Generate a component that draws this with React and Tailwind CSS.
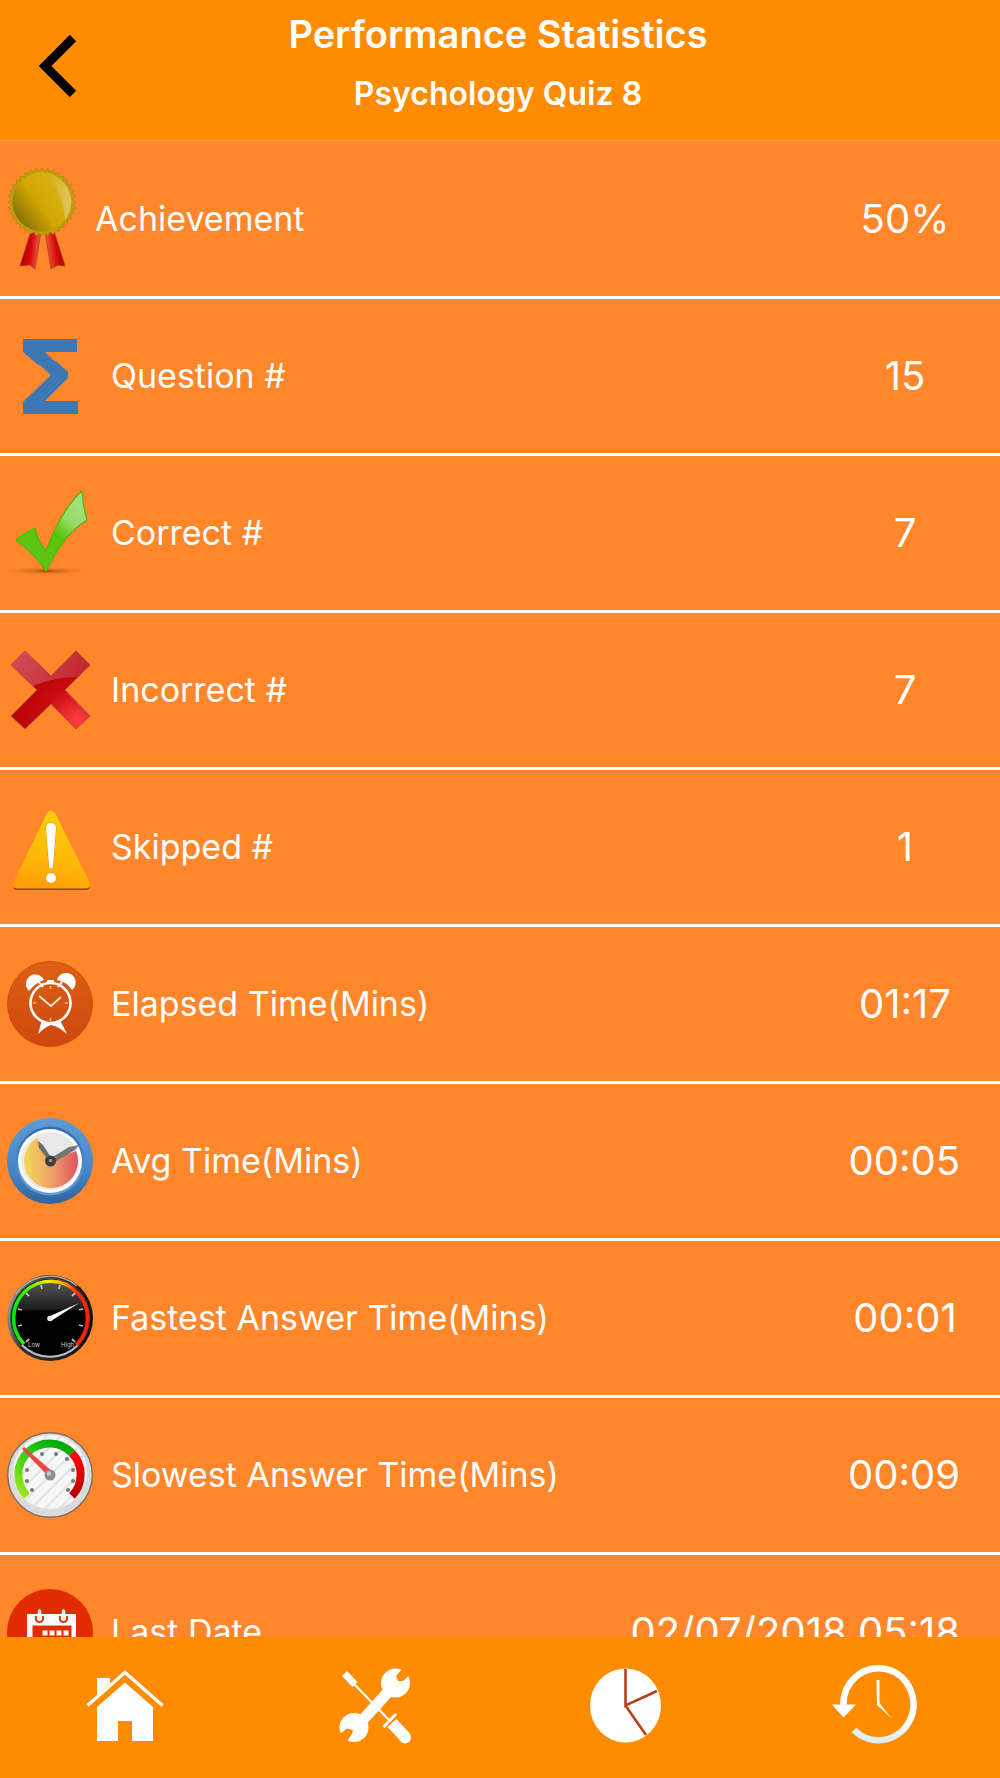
const sealPoints = Array.from({ length: 72 }, (_, i) => {
  const r = i % 2 ? 31 : 34;
  const a = (i * Math.PI) / 36;
  return `${(34 + r * Math.sin(a)).toFixed(1)},${(34 - r * Math.cos(a)).toFixed(1)}`;
}).join(' ');

function Icon({ children }) {
  return (
    <svg viewBox="0 0 86 86" className="w-[86px] h-[86px] shrink-0" aria-hidden="true">
      {children}
    </svg>
  );
}

function MedalIcon() {
  return (
    <svg viewBox="-1 0 70 102" className="w-[70px] h-[102px] shrink-0" aria-hidden="true">
      <defs>
        <linearGradient id="gold" x1="0.1" y1="0.8" x2="0.9" y2="0.2">
          <stop offset="0" stopColor="#8a7008" />
          <stop offset="0.45" stopColor="#d0a800" />
          <stop offset="1" stopColor="#d8b420" />
        </linearGradient>
        <linearGradient id="goldShine" x1="0" y1="0" x2="1" y2="0">
          <stop offset="0" stopColor="#d4ac00" />
          <stop offset="1" stopColor="#e0c560" />
        </linearGradient>
        <linearGradient id="ribbonL" x1="0" y1="0" x2="1" y2="0.2">
          <stop offset="0.2" stopColor="#b00000" />
          <stop offset="0.6" stopColor="#d90808" />
          <stop offset="1" stopColor="#e56a50" />
        </linearGradient>
        <linearGradient id="ribbonR" x1="0" y1="0.2" x2="1" y2="0">
          <stop offset="0" stopColor="#e8603c" />
          <stop offset="0.5" stopColor="#d50505" />
          <stop offset="1" stopColor="#8c0a00" />
        </linearGradient>
      </defs>
      <path d="M23 63 L33 64 L27 101 L22 97 L12 98 Z" fill="url(#ribbonL)" stroke="#a03010" strokeWidth="0.6" />
      <path d="M37 64 L46 63 L57 98 L50 97 L43 101 Z" fill="url(#ribbonR)" stroke="#a03010" strokeWidth="0.6" />
      <polygon points={sealPoints} fill="#c49c0c" stroke="#b08a14" strokeWidth="0.8" />
      <circle cx="34" cy="34" r="29.500" fill="url(#gold)" />
      <path d="M36 5 A29.500 29.500 0 0 1 57 52 C56 32 48 16 36 5Z" fill="url(#goldShine)" />
    </svg>
  );
}

function SigmaIcon() {
  return (
    <Icon>
      <path d="M16 6 H70 V19 H38 L46 27 L50 29 L61 39 V45 L38 68 H71 V81 H16 V69 L44 42 L34 33 L30 31 L16 19 Z" fill="#3c76b3" />
    </Icon>
  );
}

function CheckIcon() {
  return (
    <Icon>
      <defs>
        <linearGradient id="check" x1="0.9" y1="0" x2="0.35" y2="0.8">
          <stop offset="0.1" stopColor="#a8e07c" />
          <stop offset="0.4" stopColor="#98da68" />
          <stop offset="0.65" stopColor="#58c40c" />
          <stop offset="1" stopColor="#5cc612" />
        </linearGradient>
        <radialGradient id="checkShadow">
          <stop offset="0" stopColor="#5a2a00" />
          <stop offset="0.25" stopColor="#c05f14" stopOpacity="0.7" />
          <stop offset="1" stopColor="#d06a1a" stopOpacity="0" />
        </radialGradient>
      </defs>
      <ellipse cx="39" cy="81" rx="40" ry="4" fill="url(#checkShadow)" />
      <path d="M9 50 Q17 43 28 38 Q31 52 39 61 Q54 20 75 1 Q76 16 80 30 C60 42 50 60 39 81 Q28 64 9 50Z" fill="url(#check)" stroke="#52b810" strokeWidth="1.3" strokeLinejoin="round" />
    </Icon>
  );
}

function CrossIcon() {
  return (
    <Icon>
      <defs>
        <radialGradient id="cross" cx="0.85" cy="0.9" r="0.8">
          <stop offset="0" stopColor="#ff4146" />
          <stop offset="0.55" stopColor="#c90c10" />
          <stop offset="1" stopColor="#b60307" />
        </radialGradient>
        <linearGradient id="crossGloss" x1="0" y1="0" x2="1" y2="0.5">
          <stop offset="0" stopColor="#d05058" />
          <stop offset="1" stopColor="#c2202a" />
        </linearGradient>
        <clipPath id="crossTop">
          <path d="M0 0 H86 V30 Q50 28 26 39 L0 45 Z" />
        </clipPath>
      </defs>
      <path d="M18 4 L44 29 L69 4 L83 18 L58 43 L83 69 L69 82 L44 57 L18 82 L4 69 L30 43 L4 18 Z" fill="url(#cross)" stroke="#b84a38" strokeWidth="1" strokeLinejoin="round" />
      <path d="M18 4 L44 29 L69 4 L83 18 L58 43 L83 69 L69 82 L44 57 L18 82 L4 69 L30 43 L4 18 Z" fill="url(#crossGloss)" clipPath="url(#crossTop)" />
    </Icon>
  );
}

function WarningIcon() {
  return (
    <Icon>
      <defs>
        <linearGradient id="warn" x1="0.6" y1="0" x2="0.4" y2="1">
          <stop offset="0" stopColor="#ffcf08" />
          <stop offset="0.6" stopColor="#ffb90a" />
          <stop offset="1" stopColor="#ff9e08" />
        </linearGradient>
      </defs>
      <path d="M6 82 Q6 86 10 86 H79 Q83 86 83 82 Z" fill="#8a4c08" />
      <path d="M40 9 Q44 4 48 9 L83 79 Q84 84 79 84.500 H10 Q4 84 6 79 Z" fill="url(#warn)" />
      <path d="M39 24 Q39 19 44 19 Q49 19 49 24 L46 63 Q44 66 42 63 Z" fill="#fff" stroke="#f08a10" strokeWidth="1" paintOrder="stroke" />
      <circle cx="44" cy="74" r="5" fill="#fff" stroke="#f08a10" strokeWidth="1" paintOrder="stroke" />
    </Icon>
  );
}

function AlarmIcon() {
  return (
    <Icon>
      <defs>
        <linearGradient id="alarm" x1="0" y1="0" x2="0" y2="1">
          <stop offset="0" stopColor="#dc6114" />
          <stop offset="1" stopColor="#cd470c" />
        </linearGradient>
      </defs>
      <circle cx="43" cy="43" r="42.500" fill="url(#alarm)" stroke="#c8500f" strokeWidth="1" />
      <path d="M22 30 A9.500 9.500 0 1 1 37 19 Q28 22 22 30Z" fill="#fff" />
      <path d="M65 29 A9.500 9.500 0 1 0 50 19 Q60 21 65 29Z" fill="#fff" />
      <path d="M40 19 H47 V23 H40Z" fill="#fff" />
      <path d="M32 21 L36 26 M55 21 L51 26" stroke="#fff" strokeWidth="2" />
      <circle cx="43.500" cy="42" r="20" fill="none" stroke="#fff" strokeWidth="2.600" />
      <path d="M35 59 L31 73 Q38 66 44 64 Q51 65 60 73 L53 59 Q44 64 35 59Z" fill="#fff" />
      <path d="M32 35 L44 45 L54 36" fill="none" stroke="#ffe7d8" strokeWidth="1.800" />
      <path d="M43.500 25 V28 M26 42 H29 M58 42 H61 M43.500 57 V60" stroke="#f2bc9c" strokeWidth="1.500" />
    </Icon>
  );
}

function AvgClockIcon() {
  return (
    <Icon>
      <defs>
        <linearGradient id="avgRing" x1="0" y1="0" x2="0" y2="1">
          <stop offset="0" stopColor="#5f9bd4" />
          <stop offset="0.6" stopColor="#4686c8" />
          <stop offset="1" stopColor="#2f649e" />
        </linearGradient>
        <linearGradient id="avgInner" x1="0" y1="0" x2="0" y2="1">
          <stop offset="0" stopColor="#1b58a0" />
          <stop offset="1" stopColor="#7db2e6" />
        </linearGradient>
        <linearGradient id="avgPie" x1="0" y1="0" x2="1" y2="0">
          <stop offset="0" stopColor="#f2d95a" />
          <stop offset="0.5" stopColor="#eea468" />
          <stop offset="1" stopColor="#dd5560" />
        </linearGradient>
      </defs>
      <circle cx="43" cy="43" r="43" fill="url(#avgRing)" />
      <circle cx="43" cy="43" r="34.500" fill="url(#avgInner)" opacity="0.7" />
      <circle cx="43" cy="43" r="32" fill="#fdfdfd" />
      <circle cx="43" cy="43" r="29" fill="#e9e9e9" />
      <path d="M43 43 L30 20 A27 27 0 1 0 69 33 Z" fill="url(#avgPie)" />
      <path d="M42 43 L32 30 L31 23 L36 27 L45 41Z" fill="#6c6c6c" />
      <path d="M44 40 L62 29 L72 27 L68 32 L46 45Z" fill="#757575" />
      <circle cx="43.500" cy="43" r="5.500" fill="#3f3f3f" />
      <circle cx="43.500" cy="42.500" r="1.800" fill="#8f8f8f" />
    </Icon>
  );
}

function FastGaugeIcon() {
  return (
    <Icon>
      <defs>
        <linearGradient id="fastFace" x1="0" y1="0" x2="0" y2="1">
          <stop offset="0" stopColor="#555" />
          <stop offset="0.38" stopColor="#1c1c1c" />
          <stop offset="0.4" stopColor="#000" />
        </linearGradient>
        <linearGradient id="fastRim" x1="0" y1="0.3" x2="1" y2="0.6">
          <stop offset="0" stopColor="#a0a0a0" />
          <stop offset="0.3" stopColor="#333" />
          <stop offset="1" stopColor="#111" />
        </linearGradient>
        <linearGradient id="fastArc" x1="0" y1="0" x2="1" y2="0">
          <stop offset="0" stopColor="#00e818" />
          <stop offset="0.25" stopColor="#6cf000" />
          <stop offset="0.45" stopColor="#f4f000" />
          <stop offset="0.7" stopColor="#ff9a00" />
          <stop offset="0.85" stopColor="#ff2a08" />
          <stop offset="1" stopColor="#ff2008" />
        </linearGradient>
      </defs>
      <circle cx="43" cy="43" r="43" fill="url(#fastRim)" />
      <path d="M9 19 A42 42 0 0 1 70 11" fill="none" stroke="#aaa" strokeWidth="1.500" />
      <circle cx="43" cy="43" r="39.500" fill="#000" stroke="#555" strokeWidth="1" />
      <path d="M15 70 A39.500 39.500 0 0 0 71 70" fill="none" stroke="#b8bcc4" strokeWidth="2" />
      <circle cx="43" cy="43" r="36" fill="url(#fastFace)" />
      <path d="M17 69 A37 37 0 1 1 69 70" fill="none" stroke="url(#fastArc)" strokeWidth="3.600" />
      <path d="M11 34 L15 35 M11 51 L15 50 M19 18 L22 21 M34 10 L35 14 M53 10 L52 14 M68 18 L65 21 M76 34 L72 35 M76 51 L72 50 M19 67 L22 64 M68 67 L65 64" stroke="#bbb" strokeWidth="1.800" />
      <text x="21" y="72" fontSize="6" fill="#ccc">Low</text>
      <text x="54" y="72" fontSize="6" fill="#ccc">High</text>
      <path d="M72 28 L44 46 L41 42 Z" fill="#fff" />
      <circle cx="43" cy="43.500" r="2.800" fill="#eee" />
    </Icon>
  );
}

function SlowGaugeIcon() {
  return (
    <Icon>
      <defs>
        <linearGradient id="slowGreen" x1="0" y1="1" x2="0.8" y2="0">
          <stop offset="0" stopColor="#a4ea18" />
          <stop offset="0.6" stopColor="#30cc14" />
          <stop offset="1" stopColor="#00a80c" />
        </linearGradient>
        <linearGradient id="slowRed" x1="0" y1="0" x2="0" y2="1">
          <stop offset="0" stopColor="#ff0808" />
          <stop offset="1" stopColor="#b80000" />
        </linearGradient>
        <pattern id="slowStripes" width="10" height="10" patternUnits="userSpaceOnUse" patternTransform="rotate(45)">
          <rect width="2" height="10" fill="#dedede" />
        </pattern>
      </defs>
      <circle cx="43" cy="43" r="42.300" fill="#dadada" stroke="#777068" strokeWidth="1.400" />
      <circle cx="43" cy="40" r="37" fill="#f7f7f7" />
      <circle cx="43" cy="43" r="41" fill="url(#slowStripes)" opacity="0.8" />
      <path d="M20 64 A31 31 0 0 1 65 21" fill="none" stroke="url(#slowGreen)" strokeWidth="8" />
      <path d="M65 21 A31 31 0 0 1 65 64" fill="none" stroke="url(#slowRed)" strokeWidth="8" />
      <g fill="#777">
        <circle cx="25" cy="58" r="2" />
        <circle cx="20" cy="49" r="2" />
        <circle cx="20" cy="38" r="2" />
        <circle cx="35" cy="22" r="2" />
        <circle cx="49" cy="22" r="2" />
        <circle cx="60" cy="27" r="2" />
        <circle cx="66" cy="38" r="2" />
        <circle cx="66" cy="49" r="2" />
        <circle cx="61" cy="58" r="2" />
      </g>
      <path d="M15 17 L17 15 L46 40 L41 44 Z" fill="#f04448" />
      <circle cx="43" cy="43" r="5.500" fill="#8e8e8e" />
      <circle cx="42" cy="41.500" r="2.200" fill="#c8c8c8" />
    </Icon>
  );
}

function CalendarIcon() {
  return (
    <Icon>
      <circle cx="43" cy="43" r="43" fill="#e12c00" />
      <path d="M20 25 H69 V66 H20Z" fill="#fff" />
      <path d="M25.500 36.500 H64.500 V61 H25.500Z" fill="#e12c00" />
      <g fill="none" stroke="#e12c00" strokeWidth="2">
        <path d="M29 27 Q28 33 32.500 33 Q37 33 36 27" />
        <path d="M53 27 Q52 33 56.500 33 Q61 33 60 27" />
      </g>
      <path d="M32.500 22 V30 M56.500 22 V30" stroke="#fff" strokeWidth="3.500" strokeLinecap="round" />
      <path d="M35.500 44 H62 M28 51 H62 M28 58 H50" stroke="#fff" strokeWidth="5" strokeDasharray="5 2" />
    </Icon>
  );
}

function HomeIcon() {
  return (
    <Icon>
      <path d="M15 15 H28 V20 L15 33Z" fill="#fff" />
      <path d="M5.500 42.500 L43 9.500 L80.500 42.500" fill="none" stroke="#fff" strokeWidth="3.200" />
      <path d="M43 19.500 L71 44 V78 H50 V58 H36 V78 H15 V44Z" fill="#fff" />
    </Icon>
  );
}

function ToolsIcon() {
  return (
    <Icon>
      <path d="M10 13 L15 8 L25.500 19 L20.500 24Z" fill="#fff" />
      <path d="M22 21 L58 58" stroke="#fff" strokeWidth="2.400" />
      <path d="M51.500 64 L64 51" stroke="#fff" strokeWidth="3" />
      <path d="M60 60 L73 74" stroke="#fff" strokeWidth="12" />
      <circle cx="73" cy="74.500" r="6" fill="#fff" />
      <path d="M28 60 L57 28" stroke="#fff" strokeWidth="11" />
      <circle cx="63.500" cy="20" r="14.500" fill="#fff" />
      <circle cx="22" cy="64.500" r="14.500" fill="#fff" />
      <path d="M72 4 L64 13 L66 18 L71 18 L81 9Z" fill="#ff8c00" />
      <path d="M5 73 L15 65.500 L21 67 L20 71 L13 81Z" fill="#ff8c00" />
    </Icon>
  );
}

function PieIcon() {
  return (
    <Icon>
      <ellipse cx="43.500" cy="42.500" rx="35.500" ry="37" fill="#fff" />
      <path d="M43.500 6 V42.500 L75 28 M43.500 42.500 L64 72" fill="none" stroke="#b8401c" strokeWidth="2.600" />
    </Icon>
  );
}

function HistoryIcon() {
  return (
    <Icon>
      <defs>
        <linearGradient id="history" x1="0" y1="0" x2="0" y2="1">
          <stop offset="0.7" stopColor="#fff" />
          <stop offset="1" stopColor="#dcecf0" />
        </linearGradient>
      </defs>
      <path d="M11.500 43 A35 36 0 1 1 22 67" fill="none" stroke="url(#history)" strokeWidth="6.500" />
      <path d="M0 41.500 H24 L11.500 54.500Z" fill="#fff" />
      <path d="M44.500 17 H47.500 V40 L59 55 L45 42Z" fill="#fff" />
    </Icon>
  );
}

const stats = [
  { label: 'Achievement', value: '50%', icon: MedalIcon },
  { label: 'Question #', value: '15', icon: SigmaIcon },
  { label: 'Correct #', value: '7', icon: CheckIcon },
  { label: 'Incorrect #', value: '7', icon: CrossIcon },
  { label: 'Skipped #', value: '1', icon: WarningIcon },
  { label: 'Elapsed Time(Mins)', value: '01:17', icon: AlarmIcon },
  { label: 'Avg Time(Mins)', value: '00:05', icon: AvgClockIcon },
  { label: 'Fastest Answer Time(Mins)', value: '00:01', icon: FastGaugeIcon },
  { label: 'Slowest Answer Time(Mins)', value: '00:09', icon: SlowGaugeIcon },
  { label: 'Last Date', value: '02/07/2018 05:18', icon: CalendarIcon },
];

const tabs = [
  { label: 'Home', href: '#home', icon: HomeIcon },
  { label: 'Settings', href: '#settings', icon: ToolsIcon },
  { label: 'Statistics', href: '#statistics', icon: PieIcon },
  { label: 'History', href: '#history', icon: HistoryIcon },
];

export default function App() {
  return (
    <div className="h-screen flex flex-col bg-[#ff862a] text-white font-['Inter',sans-serif]">
      <header className="grid grid-cols-[116px_1fr_120px] shrink-0 bg-[#ff8c00] border-b border-[#ffa04c]">
        <button type="button" aria-label="Back" className="flex items-center justify-center pb-2">
          <svg viewBox="0 0 38 62" className="w-[38px] h-[62px]" aria-hidden="true">
            <path d="M34 3 L6 31 L34 59" fill="none" stroke="#000" strokeWidth="9" />
          </svg>
        </button>
        <div className="flex flex-col gap-1 pt-[6px] pb-[18px] text-center font-semibold">
          <h1 className="text-[38px] leading-[56px]">Performance Statistics</h1>
          <p className="text-[32px] leading-[56px]">Psychology Quiz 8</p>
        </div>
      </header>

      <main className="flex-1 min-h-0 overflow-y-auto [scrollbar-width:none]">
        <dl className="pt-px">
          {stats.map(({ label, value, icon: StatIcon }) => (
            <div key={label} className="flex items-center h-[157px] pl-[7px] pr-10 border-b-3 border-white">
              <StatIcon />
              <dt className="ml-[18px] text-[34px] leading-[44px]">{label}</dt>
              <dd className="ml-auto min-w-[110px] text-center text-[40px] leading-[48px]">{value}</dd>
            </div>
          ))}
        </dl>
      </main>

      <nav className="grid grid-cols-4 h-[141px] pb-[3px] shrink-0 bg-[#ff8c00]">
        {tabs.map(({ label, href, icon: TabIcon }) => (
          <a key={label} href={href} aria-label={label} className="flex items-center justify-center">
            <TabIcon />
          </a>
        ))}
      </nav>
    </div>
  );
}
